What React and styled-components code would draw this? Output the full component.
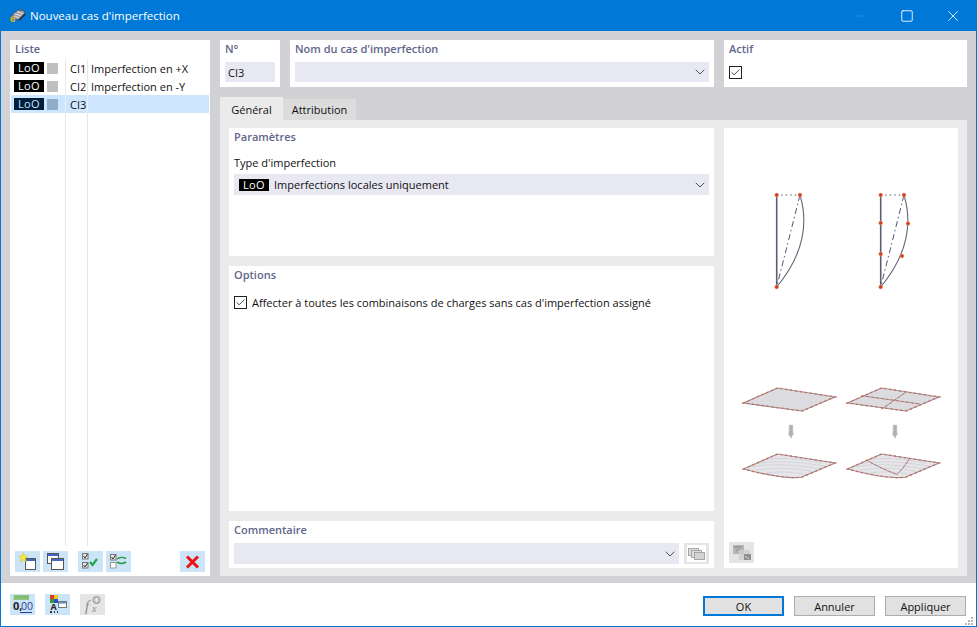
import React from 'react';
import styled, { createGlobalStyle } from 'styled-components';
import { ChevronDown, Check, Minus, Square, X } from 'lucide-react';

const GlobalStyle = createGlobalStyle`
    html, body {
        margin: 0;
        padding: 0;
        background: #ffffff;
    }
    body {
        font-family: "Open Sans", "Liberation Sans", sans-serif;
        font-size: 11px;
        color: #111111;
    }
`;

const Window = styled.div`
    width: 977px;
    height: 627px;
    box-sizing: border-box;
    display: flex;
    flex-direction: column;
    border: 1px solid #0078d7;
    border-top: 0;
    overflow: hidden;
`;

const TitleBar = styled.div`
    height: 31px;
    margin: 0 -1px;
    flex: none;
    display: flex;
    align-items: center;
    background: #0078d7;
    color: #ffffff;
    padding-left: 9px;
`;

const TitleText = styled.span`
    margin-left: 4px;
    font-size: 11.5px;
`;

const WindowControls = styled.div`
    margin-left: auto;
    margin-right: 1px;
    display: flex;
    align-items: center;
`;

const WindowControl = styled.div`
    width: 46px;
    height: 31px;
    display: flex;
    align-items: center;
    justify-content: center;
    color: ${(p) => (p.$dim ? '#4da0e3' : '#ffffff')};
`;

const Body = styled.div`
    flex: 1;
    display: grid;
    grid-template-columns: 200px 1fr;
    gap: 10px;
    padding: 9px 9px 7px 9px;
    background: #d1d1d6;
    min-height: 0;
`;

const ListPanel = styled.div`
    display: flex;
    flex-direction: column;
    background: #ffffff;
`;

const PanelTitle = styled.div`
    height: 18px;
    line-height: 18px;
    padding-left: 5px;
    font-weight: 600;
    font-size: 11px;
    color: #5f6689;
`;

const ListBody = styled.div`
    flex: 1;
    margin: 1px 1px 0 1px;
    background-image: linear-gradient(#e8e8e8, #e8e8e8), linear-gradient(#e8e8e8, #e8e8e8);
    background-size: 1px 100%;
    background-repeat: no-repeat;
    background-position: 54px 0, 76px 0;
`;

const ListRow = styled.div`
    height: 18px;
    display: flex;
    align-items: center;
    background: ${(p) => (p.$selected ? '#cde6fd' : 'transparent')};
`;

const RowMarks = styled.div`
    width: 55px;
    height: 100%;
    box-sizing: border-box;
    padding-left: 3px;
    display: flex;
    align-items: center;
    gap: 3px;
    border-right: 1px solid ${(p) => (p.$selected ? '#e3f1fe' : '#e8e8e8')};
`;

const RowCode = styled.div`
    width: 22px;
    height: 100%;
    box-sizing: border-box;
    padding-left: 4px;
    line-height: 20px;
    border-right: 1px solid ${(p) => (p.$selected ? '#e3f1fe' : '#e8e8e8')};
`;

const RowName = styled.div`
    padding-left: 3px;
    height: 100%;
    line-height: 20px;
`;

const Badge = styled.span`
    width: 30px;
    height: 12px;
    line-height: 12px;
    flex: none;
    text-align: center;
    background: ${(p) => (p.$selected ? '#001f3d' : '#000000')};
    color: ${(p) => (p.$selected ? '#cde6fd' : '#ffffff')};
    font-size: 11px;
    letter-spacing: 0.3px;
`;

const Swatch = styled.span`
    width: 11px;
    height: 11px;
    flex: none;
    background: ${(p) => (p.$selected ? '#8fadc9' : '#c0c0c0')};
`;

const ListToolbar = styled.div`
    height: 21px;
    padding: 5px 5px 4px 5px;
    display: flex;
    gap: 3px;
`;

const IconButton = styled.div`
    width: 25px;
    height: 21px;
    flex: none;
    display: flex;
    align-items: center;
    justify-content: center;
    background: ${(p) => (p.$disabled ? '#e5e5e5' : '#cce4f7')};
    margin-left: ${(p) => p.$offset || 0}px;
`;

const RightColumn = styled.div`
    display: flex;
    flex-direction: column;
    min-width: 0;
`;

const HeaderRow = styled.div`
    height: 47px;
    flex: none;
    display: grid;
    grid-template-columns: 60px 424px 1fr;
    gap: 10px;
`;

const Section = styled.div`
    background: #ffffff;
    display: flex;
    flex-direction: column;
    flex: ${(p) => (p.$grow ? 1 : 'none')};
    height: ${(p) => (p.$height ? `${p.$height}px` : 'auto')};
`;

const FieldWrap = styled.div`
    margin: ${(p) => p.$top || 4}px 5px 0 5px;
    display: flex;
    gap: 3px;
`;

const Field = styled.div`
    flex: 1;
    height: ${(p) => p.$height || 20}px;
    box-sizing: border-box;
    padding: 0 5px;
    display: flex;
    align-items: center;
    background: #e8e8f2;
`;

const CodeField = styled(Field)`
    padding: 0 3px;
`;

const FieldChevron = styled(ChevronDown)`
    margin-left: auto;
    margin-right: -4px;
    color: #444444;
`;

const CheckBox = styled.span`
    width: 13px;
    height: 13px;
    box-sizing: border-box;
    flex: none;
    display: inline-flex;
    align-items: center;
    justify-content: center;
    border: 1px solid #222222;
    background: #ffffff;
    color: #222222;
`;

const CheckWrap = styled.div`
    margin: ${(p) => p.$top}px 5px 0 5px;
    display: flex;
    align-items: center;
    gap: 5px;
`;

const Tabs = styled.div`
    margin-top: 10px;
    height: 23px;
    flex: none;
    display: flex;
    align-items: flex-end;
`;

const Tab = styled.div`
    height: ${(p) => (p.$active ? 23 : 21)}px;
    width: ${(p) => p.$width}px;
    box-sizing: border-box;
    text-align: center;
    line-height: ${(p) => (p.$active ? 25 : 21)}px;
    background: ${(p) => (p.$active ? '#ebebeb' : '#dcdcdc')};
`;

const TabPanel = styled.div`
    flex: 1;
    min-height: 0;
    padding: 8px 9px 8px 9px;
    background: #ebebeb;
    display: grid;
    grid-template-columns: 485px 234px;
    gap: 10px;
`;

const FormColumn = styled.div`
    display: flex;
    flex-direction: column;
    gap: 10px;
    min-height: 0;
`;

const FieldLabel = styled.div`
    margin: 8px 5px 0 5px;
    line-height: 18px;
`;

const FieldText = styled.span`
    margin-left: 5px;
`;

const PreviewPanel = styled.div`
    background: #ffffff;
    display: flex;
    flex-direction: column;
    padding-bottom: 5px;
`;

const PreviewArt = styled.svg`
    flex: none;
    display: block;
`;

const PreviewToolbar = styled.div`
    padding-left: 5px;
`;

const Footer = styled.div`
    height: 43px;
    box-sizing: border-box;
    flex: none;
    display: flex;
    align-items: flex-start;
    padding: 11px 10px 0 9px;
    gap: 10px;
    position: relative;
`;

const FooterButtons = styled.div`
    margin-left: auto;
    margin-top: 2px;
    display: flex;
    gap: 10px;
`;

const DialogButton = styled.div`
    width: 81px;
    height: 20px;
    box-sizing: border-box;
    background: #e1e1e1;
    border: ${(p) => (p.$primary ? '2px solid #0078d7' : '1px solid #adadad')};
    display: flex;
    align-items: center;
    justify-content: center;
`;

const Grip = styled.svg`
    position: absolute;
    right: 3px;
    bottom: 1px;
`;

const AppIcon = () => (
    <svg width="17" height="18" viewBox="0 0 17 18">
        <g transform="translate(0 1)">
            <path d="M3 7 L9 2 L15 2.5 L16 6 L10 12 L4 11 Z" fill="#9a9aa2" stroke="#4a4a50" strokeWidth="0.8" />
            <path d="M5.5 5.5 L12 8 M8 3.5 L14 6 M6 8 L10 10" stroke="#e8e8ec" strokeWidth="1" />
            <path d="M10 12 L16 6" stroke="#26262a" strokeWidth="1.6" />
        </g>
        <text x="1" y="15" fontSize="9" fontWeight="700" fontFamily="Open Sans, sans-serif" fill="#e9b918">6</text>
    </svg>
);

const MiniWindow = ({ x, y, w, h }) => (
    <g>
        <rect x={x + 0.5} y={y + 0.5} width={w} height={h} fill="#ffffff" stroke="#555555" />
        <rect x={x + 1} y={y + 1} width={w - 1} height="2" fill="#4466c4" />
    </g>
);

const NewIcon = () => (
    <svg width="21" height="19" viewBox="0 0 21 19">
        <MiniWindow x={8} y={6} w={10} h={11} />
        <path d="M6.3 0.5 L7.6 4 L11 4 L8.4 6.3 L9.4 9.8 L6.3 7.8 L3.2 9.8 L4.2 6.3 L1.6 4 L5 4 Z" fill="#f5e63c" stroke="#d4c22e" strokeWidth="0.5" />
    </svg>
);

const CopyIcon = () => (
    <svg width="21" height="19" viewBox="0 0 21 19">
        <MiniWindow x={2} y={1} w={11} h={10} />
        <MiniWindow x={6} y={6} w={12} h={11} />
    </svg>
);

const Tick = ({ x, y }) => (
    <g>
        <rect x={x + 0.5} y={y + 0.5} width="5.5" height="5.5" fill="#e8e8e8" stroke="#777777" />
        <path d={`M${x + 1.5} ${y + 3} l1.5 2 l2.5 -4`} fill="none" stroke="#333333" strokeWidth="1" />
    </g>
);

const CheckAllIcon = () => (
    <svg width="21" height="19" viewBox="0 0 21 19">
        <Tick x={2} y={1} />
        <Tick x={2} y={10} />
        <path d="M10 10 L12.5 13 L17 7" fill="none" stroke="#1fa84a" strokeWidth="2.2" />
    </svg>
);

const SwapIcon = () => (
    <svg width="21" height="19" viewBox="0 0 21 19">
        <Tick x={2} y={2} />
        <rect x="2.5" y="10.5" width="5.5" height="5.5" fill="#ffffff" stroke="#999999" />
        <path d="M9 7 C11 5 15 5 18 6.5 M18 10 C15 12 12 12 9 10" fill="none" stroke="#2a9a46" strokeWidth="1.6" />
    </svg>
);

const DeleteIcon = () => (
    <svg width="15" height="14" viewBox="0 0 15 14">
        <path d="M2 1.5 L13 12.5 M13 1.5 L2 12.5" stroke="#ee1111" strokeWidth="3" />
    </svg>
);

const RulerIcon = () => (
    <svg width="21" height="19" viewBox="0 0 21 19">
        <rect x="1.5" y="0" width="15.5" height="5" fill="#8fc47a" />
        <path d="M4 1 V3 M7 1 V3 M10 1 V3 M13 1 V3 M16 1 V3" stroke="#6aa556" />
        <text x="1" y="15" fontSize="11" fontWeight="700" fontFamily="Open Sans, sans-serif" fill="#222222">0,</text>
        <text x="9" y="15" fontSize="10.5" fontFamily="Open Sans, sans-serif" fill="#2a3f98">00</text>
        <rect x="8" y="17" width="12" height="1" fill="#2a3f98" />
    </svg>
);

const StyleIcon = () => (
    <svg width="21" height="19" viewBox="0 0 21 19">
        <rect x="3" y="0" width="4" height="4" fill="#d83a2a" />
        <rect x="7" y="0" width="4" height="4" fill="#e6c820" />
        <rect x="3" y="4" width="4" height="4" fill="#3a9a3a" />
        <rect x="7" y="4" width="4" height="4" fill="#2a4fd0" />
        <text x="3.5" y="15" fontSize="9" fontWeight="700" fontFamily="Open Sans, sans-serif" fill="#222222">A</text>
        <path d="M3 17 H5 M7 17 H8 M10 17 H11" stroke="#333" strokeWidth="2" />
        <rect x="11.5" y="6.5" width="8" height="6" fill="#ffffff" stroke="#777" />
        <rect x="12" y="7" width="7" height="1.6" fill="#6b8fc9" />
    </svg>
);

const FormulaIcon = () => (
    <svg width="21" height="19" viewBox="0 0 21 19">
        <text x="3" y="16" fontSize="15" fontStyle="italic" fontFamily="Liberation Serif, serif" fill="#8a8a8a">f</text>
        <circle cx="14.5" cy="5" r="3.6" fill="#c4c4c4" stroke="#9a9a9a" />
        <path d="M12.5 5 H16.5 M14.5 3 V7" stroke="#f0f0f0" />
        <text x="10" y="17" fontSize="10" fontStyle="italic" fontFamily="Liberation Serif, serif" fill="#8a8a8a">x</text>
    </svg>
);

const StackIcon = () => (
    <svg width="21" height="19" viewBox="0 0 21 19">
        <rect x="1" y="1" width="19" height="17" fill="#ffffff" />
        <rect x="2.5" y="4.5" width="10" height="7" fill="#dddddd" stroke="#a5a5a5" />
        <rect x="5.5" y="6.5" width="10" height="7" fill="#dddddd" stroke="#a5a5a5" />
        <rect x="8.5" y="8.5" width="10" height="7" fill="#d4d4d4" stroke="#a5a5a5" />
    </svg>
);

const ViewIcon = () => (
    <svg width="21" height="19" viewBox="0 0 21 19">
        <rect x="2" y="2" width="11" height="9" fill="#b5b5b5" />
        <path d="M3 4 H11 M5 8 L9 5" stroke="#8a8a8a" />
        <rect x="8" y="7" width="11" height="10" fill="#cfcfcf" opacity="0.85" />
        <rect x="13" y="11" width="7" height="6" fill="#8f8f8f" />
        <path d="M14 13 L18 16" stroke="#d8d8d8" />
    </svg>
);

const Node = ({ x, y }) => <circle cx={x} cy={y} r="2" fill="#d33a12" stroke="#f0b8a0" strokeWidth="0.5" />;

const Member = ({ dx, nodes }) => (
    <g>
        <line x1={776.7 + dx} y1="195" x2={776.7 + dx} y2="287" stroke="#5c5c70" strokeWidth="1.6" />
        <line x1={776.7 + dx} y1="195" x2={800 + dx} y2="195" stroke="#55556a" strokeWidth="1" strokeDasharray="1.5 3" />
        <line x1={800 + dx} y1="195" x2={776.7 + dx} y2="287" stroke="#55556a" strokeWidth="1" strokeDasharray="6 3 1.5 3" />
        <path d={`M${800 + dx} 195 C${806 + dx} 215 ${809 + dx} 248 ${776.7 + dx} 287`} fill="none" stroke="#66667a" strokeWidth="1.1" />
        <Node x={776.7 + dx} y={195} />
        <Node x={800 + dx} y={195} />
        <Node x={776.7 + dx} y={287} />
        {nodes.map(([x, y]) => <Node key={`${x}-${y}`} x={x} y={y} />)}
    </g>
);

const FLAT = 'M743.5 403 L777.5 388 L835 397 L802 411 Z';
const WARPED = 'M743.5 469 L777.5 454 L835 463 L802 477 C790 479 770 476 743.5 469 Z';

const DashedEdge = ({ d, $thin }) => (
    <g fill="none">
        <path d={d} stroke="#9090a2" strokeWidth={$thin ? 0.9 : 1.2} />
        <path d={d} stroke="#e0623a" strokeWidth={$thin ? 1 : 1.3} strokeDasharray="1.8 3.2" />
    </g>
);

const Plate = ({ dx, children }) => (
    <g transform={`translate(${dx} 0)`}>
        <path d={FLAT} fill="#dcdce0" />
        <DashedEdge d={FLAT} />
        {children}
    </g>
);

const Warped = ({ dx, children }) => (
    <g transform={`translate(${dx} 0)`}>
        <path d={WARPED} fill="#e6e6ea" />
        <path d="M762 460 C780 457 800 459 822 463 M755 464 C775 460 800 462 824 466 M750 467 C772 463 800 465 820 469 M756 470 C775 467 798 468 815 472 M766 473 C780 471 795 472 808 475" fill="none" stroke="#cbcbd1" strokeWidth="0.7" />
        <DashedEdge d={WARPED} />
        {children}
    </g>
);

const DownArrow = ({ x }) => (
    <path d={`M${x - 2} 425 H${x + 2} V433 H${x + 3} L${x} 438.5 L${x - 3} 433 H${x - 2} Z`} fill="#aeb0be" stroke="#e6d8c8" strokeWidth="0.6" />
);

const rows = [
    { code: 'CI1', name: 'Imperfection en +X' },
    { code: 'CI2', name: 'Imperfection en -Y' },
    { code: 'CI3', name: '', selected: true }
];

const App = () => (
    <Window>
        <GlobalStyle />
        <TitleBar>
            <AppIcon />
            <TitleText>Nouveau cas d'imperfection</TitleText>
            <WindowControls>
                <WindowControl $dim><Minus size={14} strokeWidth={1} /></WindowControl>
                <WindowControl><Square size={14} strokeWidth={1.5} /></WindowControl>
                <WindowControl><X size={18} strokeWidth={1.1} /></WindowControl>
            </WindowControls>
        </TitleBar>
        <Body>
            <ListPanel>
                <PanelTitle>Liste</PanelTitle>
                <ListBody>
                    {rows.map((row) => (
                        <ListRow key={row.code} $selected={row.selected}>
                            <RowMarks $selected={row.selected}>
                                <Badge $selected={row.selected}>LoO</Badge>
                                <Swatch $selected={row.selected} />
                            </RowMarks>
                            <RowCode $selected={row.selected}>{row.code}</RowCode>
                            <RowName>{row.name}</RowName>
                        </ListRow>
                    ))}
                </ListBody>
                <ListToolbar>
                    <IconButton><NewIcon /></IconButton>
                    <IconButton><CopyIcon /></IconButton>
                    <IconButton $offset={7}><CheckAllIcon /></IconButton>
                    <IconButton><SwapIcon /></IconButton>
                    <IconButton $offset={46}><DeleteIcon /></IconButton>
                </ListToolbar>
            </ListPanel>
            <RightColumn>
                <HeaderRow>
                    <Section>
                        <PanelTitle>N°</PanelTitle>
                        <FieldWrap><CodeField>CI3</CodeField></FieldWrap>
                    </Section>
                    <Section>
                        <PanelTitle>Nom du cas d'imperfection</PanelTitle>
                        <FieldWrap><Field><FieldChevron size={16} strokeWidth={1.4} /></Field></FieldWrap>
                    </Section>
                    <Section>
                        <PanelTitle>Actif</PanelTitle>
                        <CheckWrap $top={8}>
                            <CheckBox><Check size={11} strokeWidth={1.8} /></CheckBox>
                        </CheckWrap>
                    </Section>
                </HeaderRow>
                <Tabs>
                    <Tab $active $width={63}>Général</Tab>
                    <Tab $width={73}>Attribution</Tab>
                </Tabs>
                <TabPanel>
                    <FormColumn>
                        <Section $height={128}>
                            <PanelTitle>Paramètres</PanelTitle>
                            <FieldLabel>Type d'imperfection</FieldLabel>
                            <FieldWrap $top={2}>
                                <Field $height={21}>
                                    <Badge>LoO</Badge>
                                    <FieldText>Imperfections locales uniquement</FieldText>
                                    <FieldChevron size={16} strokeWidth={1.4} />
                                </Field>
                            </FieldWrap>
                        </Section>
                        <Section $grow>
                            <PanelTitle>Options</PanelTitle>
                            <CheckWrap $top={11}>
                                <CheckBox><Check size={11} strokeWidth={1.8} /></CheckBox>
                                <span>Affecter à toutes les combinaisons de charges sans cas d'imperfection assigné</span>
                            </CheckWrap>
                        </Section>
                        <Section $height={47}>
                            <PanelTitle>Commentaire</PanelTitle>
                            <FieldWrap>
                                <Field $height={21}><FieldChevron size={16} strokeWidth={1.4} /></Field>
                                <IconButton $disabled $offset={2}><StackIcon /></IconButton>
                            </FieldWrap>
                        </Section>
                    </FormColumn>
                    <PreviewPanel>
                        <PreviewArt viewBox="724 128 234 414" width="234" height="414">
                            <Member dx={0} nodes={[]} />
                            <Member dx={104} nodes={[[880.7, 223], [880.7, 254], [908, 223.5], [902, 256]]} />
                            <Plate dx={0} />
                            <Plate dx={104}>
                                <DashedEdge $thin d="M757.7 395.7 L816 404" />
                                <DashedEdge $thin d="M777.7 409 L802.7 391.7" />
                            </Plate>
                            <DownArrow x={791} />
                            <DownArrow x={895} />
                            <Warped dx={0} />
                            <Warped dx={104}>
                                <DashedEdge $thin d="M762.7 460 C772 466 782 470 792.7 474.5" />
                                <DashedEdge $thin d="M806 458 C802 464 798 470 792.7 474.5" />
                            </Warped>
                        </PreviewArt>
                        <PreviewToolbar>
                            <IconButton $disabled><ViewIcon /></IconButton>
                        </PreviewToolbar>
                    </PreviewPanel>
                </TabPanel>
            </RightColumn>
        </Body>
        <Footer>
            <IconButton><RulerIcon /></IconButton>
            <IconButton><StyleIcon /></IconButton>
            <IconButton $disabled><FormulaIcon /></IconButton>
            <FooterButtons>
                <DialogButton $primary>OK</DialogButton>
                <DialogButton>Annuler</DialogButton>
                <DialogButton>Appliquer</DialogButton>
            </FooterButtons>
            <Grip width="8" height="8" viewBox="0 0 8 8">
                <path d="M6 0h2v2h-2z M3 3h2v2h-2z M6 3h2v2h-2z M0 6h2v2h-2z M3 6h2v2h-2z M6 6h2v2h-2z" fill="#b8b8b8" />
            </Grip>
        </Footer>
    </Window>
);

export default App;
